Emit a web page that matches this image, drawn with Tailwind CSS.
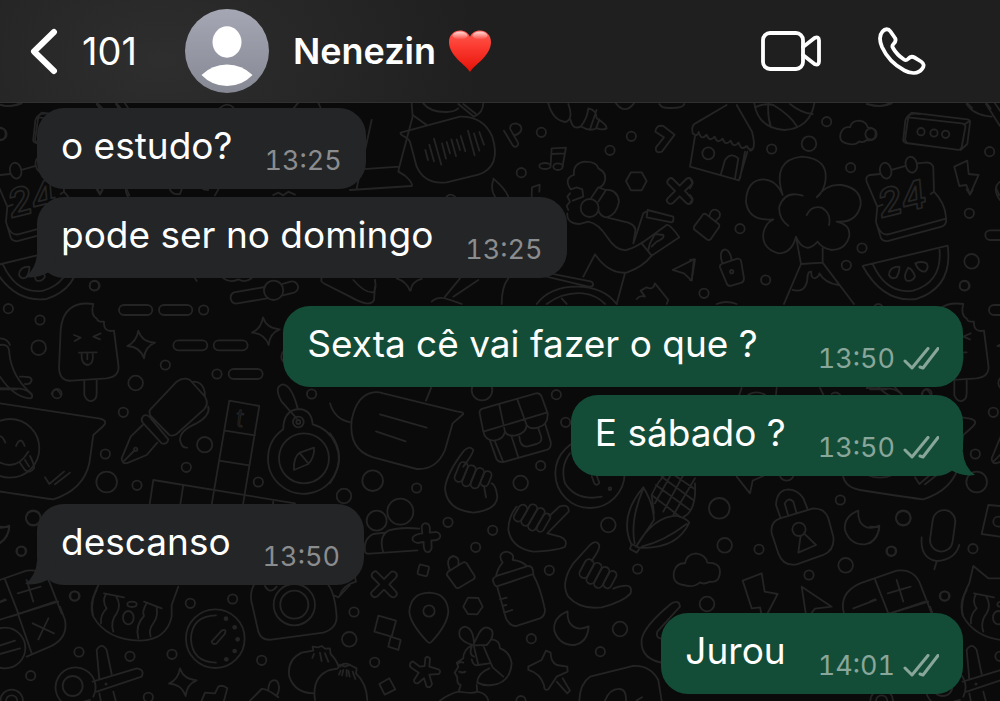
<!DOCTYPE html>
<html lang="pt-BR">
<head>
    <meta charset="UTF-8">
    <meta name="viewport" content="width=device-width, initial-scale=1.0">
    <title>Nenezin ❤️</title>
    <script src="https://cdn.jsdelivr.net/npm/@tailwindcss/browser@4"></script>
</head>
<body class="bg-[#0a0a0a] text-white font-['Inter',sans-serif] min-h-screen flex flex-col relative overflow-x-hidden">

    <!-- Wallpaper: one tile of doodles, repeated to the left and right -->
    <svg class="absolute inset-0 w-full h-full" viewBox="0 0 1000 701" preserveAspectRatio="xMidYMid slice" fill="none" stroke="#242424" stroke-width="5.5" stroke-linecap="round" stroke-linejoin="round" aria-hidden="true">
        <defs>
            <path id="cross" d="M-14 0L-36 -22Q-40 -30 -32 -36Q-26 -42 -20 -36L0 -16L20 -36Q28 -42 35 -35Q42 -28 36 -20L16 0L36 22Q42 30 35 36Q28 42 20 36L0 16L-20 36Q-28 42 -35 35Q-42 28 -36 22Z"/>
            <path id="moon" d="M595 422Q550 440 555 480Q570 525 615 523Q655 515 658 467Q620 485 600 455Q593 440 595 422Z"/>
            <path id="star" d="M415 122Q425 155 465 158Q435 170 432 205Q420 170 382 168Q410 155 415 122Z"/>
            <g id="doodles">
                <!-- top left -->
                <g transform="translate(0 100) scale(.3333)">
                    <circle cx="3" cy="102" r="17"/><circle cx="284" cy="557" r="15"/>
                    <path d="M112 130L105 120L115 50Q120 38 150 42M0 14Q30 24 60 10M290 8L306 24M350 10L362 26M660 24Q680 5 700 22M880 26L895 8M955 8L962 24"/>
                    <path d="M290 268L300 284L308 270M380 268L388 286M510 268Q515 285 540 282L545 268M610 268L625 270M655 268L645 286M820 285L835 278L850 286L865 275L885 284"/>
                    <path d="M795 561L702 577A18 18 0 0 0 708 611L802 595M848 552L872 545A17 17 0 0 1 882 578L846 587"/>
                    <circle cx="821" cy="571" r="29"/>
                    <path d="M585 535L590 543M670 535Q690 550 715 538Q735 550 755 535M965 535Q960 545 975 552L1050 590"/>
                </g>
                <!-- top middle -->
                <g transform="translate(350 100) scale(.3333)">
                    <path d="M20 265L65 60M0 270L185 258Q190 250 165 227L145 215L148 200L30 208M148 200L188 50L185 10"/>
                    <path d="M152 98L330 50Q400 48 427 110Q455 200 385 224L290 247Q225 255 200 200L180 125Q175 115 160 108Q150 103 152 98Z"/>
                    <path d="M226 150l8 30M238 134l14 50M252 116l22 78M276 130l12 46M290 126l10 34M304 118l14 50M320 118l10 32M332 108l14 46M354 92l20 74M372 100l16 52M388 96l14 38"/>
                    <path d="M188 45L230 75M220 10Q240 37 290 36Q315 35 325 25M325 12L372 50Q398 40 400 10M340 12L378 42"/>
                    <path d="M462 92L488 136A9 9 0 0 0 504 128L480 86Q480 70 498 70Q516 74 514 90Q508 103 495 105"/>
                    <circle cx="574" cy="97" r="14"/><circle cx="514" cy="218" r="14"/><circle cx="780" cy="151" r="14"/><circle cx="844" cy="109" r="14"/>
                    <path d="M602 195L605 145L648 143L638 198M604 162L645 160"/>
                    <ellipse cx="585" cy="198" rx="17" ry="9"/><ellipse cx="624" cy="200" rx="14" ry="10"/>
                    <path d="M595 10Q608 60 645 66Q672 60 655 12M662 60Q668 90 692 80Q712 55 715 25Q740 30 740 55Q772 75 770 85Q755 92 740 84Q720 96 695 80M740 30L720 88M748 58L738 86"/>
                    <path d="M798 10Q825 45 852 10M928 12Q935 25 960 24Q1000 25 1003 12"/>
                    <path d="M918 142L942 112L916 95Q918 74 940 78L974 104L936 155Q915 162 918 142Z"/>
                    <path d="M828 243L843 217H875L890 243L875 271H843Z"/>
                    <use href="#cross" x="989" y="273"/>
                    <path d="M662 268Q640 235 672 225Q668 190 705 185Q740 185 745 205Q775 220 762 250Q755 262 748 262M662 268L680 262L697 268L700 290L668 302M660 280L652 290L660 305L650 318L655 330M652 340Q650 372 690 372L715 365"/>
                    <circle cx="719" cy="324" r="27"/>
                    <path d="M723 295L745 262L768 270L745 305M768 270Q803 268 807 305Q800 345 770 352M745 330Q750 350 770 352L835 368Q862 378 855 400L850 430M715 365Q745 370 772 412Q800 455 830 450Q860 440 880 425"/>
                    <path d="M852 425L880 340L888 335M893 330L970 350Q972 365 965 367L890 352ZM875 430L950 375Q960 372 988 412L905 467ZM895 450L900 430L915 402L940 405Q945 415 920 425L905 440"/>
                    <path d="M700 530L735 463Q775 522 830 518Q880 500 905 467M825 520L800 612"/>
                    <path d="M545 290L546 262L569 254L568 275M430 240Q420 265 435 290M430 236Q465 265 475 290M290 290Q300 278 315 290"/>
                    <path d="M968 510L1032 478L1025 542L1002 520Z"/>
                    <path d="M600 520L725 545Q738 560 715 560L590 530M560 612Q600 560 680 560Q760 560 800 612M590 612Q640 575 700 580Q740 585 765 612M635 595L650 612M860 597Q870 585 885 590L872 572L890 562Q910 572 915 550L955 600L950 612"/>
                    <path d="M455 612Q455 560 475 535M285 590L330 535M310 590L385 540M245 605Q265 585 300 600L335 612M180 572Q170 545 140 535M182 572Q185 545 215 537M10 540Q45 580 70 577Q80 570 75 540M0 590Q60 625 72 600L75 560"/>
                </g>
                <!-- top right -->
                <g transform="translate(690 100) scale(.3333)">
                    <path d="M8 100Q2 75 20 68L110 15M140 15L186 95Q200 150 180 152M8 100Q22 112 26 96Q34 124 50 104Q58 128 74 110Q82 134 98 116Q106 140 122 122Q130 146 146 128Q154 154 170 138Q176 150 186 148M15 108L0 200L147 241L172 155M150 235L165 155M92 225L105 180Q122 155 145 175L135 235"/>
                    <circle cx="55" cy="160" r="18"/>
                    <path d="M193 10Q205 85 283 90Q360 85 373 10M235 10Q232 50 243 82M250 15Q300 45 320 78M300 12Q335 40 368 42M195 22Q225 8 250 15"/>
                    <circle cx="410" cy="65" r="14"/><circle cx="245" cy="147" r="14"/><circle cx="357" cy="131" r="22"/><circle cx="482" cy="203" r="14"/><circle cx="150" cy="386" r="14"/><circle cx="516" cy="444" r="14"/><circle cx="469" cy="496" r="14"/><circle cx="227" cy="540" r="14"/><circle cx="42" cy="580" r="14"/><circle cx="838" cy="340" r="14"/><circle cx="899" cy="155" r="14"/><circle cx="845" cy="484" r="22"/><circle cx="823" cy="557" r="14"/>
                    <path d="M470 130Q445 125 452 100Q460 78 480 82Q485 62 508 62Q530 65 533 82Q558 82 557 103Q555 125 530 120Q520 130 508 124Q495 138 470 130Z"/>
                    <path d="M655 52L815 70Q828 72 826 82L815 142Q812 152 800 149L648 129Q638 126 640 118L646 62Q648 52 655 52ZM650 52L665 38L832 58Q842 60 840 68L832 132L812 150M822 74L840 62"/>
                    <circle cx="693" cy="95" r="11"/><circle cx="732" cy="99" r="11"/><circle cx="767" cy="103" r="11"/>
                    <path d="M793 200L832 182L836 222L866 225L840 283L829 255L808 258Z"/>
                    <path d="M570 222L540 225Q525 230 530 245L562 320M605 210L647 198M682 190L712 187Q730 190 730 205L732 275M562 320L558 365L572 412Q578 425 595 423L755 380Q772 375 768 350Q765 310 732 275M562 378Q575 410 600 402L768 356M562 320L578 314M722 282L732 275"/>
                    <ellipse cx="587" cy="212" rx="17" ry="24" transform="rotate(-12 587 212)"/><ellipse cx="664" cy="194" rx="17" ry="24" transform="rotate(-12 664 194)"/>
                    <text x="574" y="354" transform="rotate(-14 574 354)" font-family="Inter" font-size="116" font-weight="600" font-style="italic" stroke-width="5">24</text>
                    <path d="M278 285Q245 180 335 170Q420 175 405 250Q398 280 380 292Q410 250 455 255Q515 265 512 315Q500 370 440 365Q485 375 477 412Q465 450 425 450Q395 445 383 425Q365 445 350 443Q330 440 318 410Q305 460 265 460Q215 445 220 400Q225 370 250 358Q175 365 168 305Q170 240 220 238Q260 240 278 285M338 287Q285 270 268 320Q265 355 295 377M350 345Q365 315 395 323Q425 340 417 375M318 410L333 492L398 488V445M333 492L282 612M398 488L492 612M308 570Q345 580 352 540Q352 512 364 515Q362 535 375 535Q388 530 388 520Q405 550 445 555"/>
                    <path d="M12 380L40 342Q45 340 50 344L86 372Q90 376 87 382L62 418Q56 423 50 418L12 388ZM58 348Q62 325 80 330Q95 338 88 352L76 364"/>
                    <path d="M95 492L142 476Q150 475 153 482L162 535Q162 545 155 548L122 558Q113 558 110 550L90 502Q88 495 95 492ZM97 490Q85 452 105 448Q120 450 125 480"/>
                    <circle cx="125" cy="515" r="5"/>
                    <path d="M518 498L773 437Q790 560 680 597Q580 610 518 498ZM548 492Q590 585 670 572Q760 545 748 443M628 500Q598 500 597 525Q605 540 620 532Q630 515 628 500ZM655 503Q638 530 650 542Q668 545 675 530Q670 510 655 503ZM676 490Q685 515 705 515Q718 505 710 490Q695 482 676 490Z"/>
                    <rect x="886" y="391" width="100" height="29" rx="14"/>
                    <path d="M530 12Q575 25 605 10M830 12Q850 45 905 50M888 12L930 78M915 10L930 32M930 245Q905 265 930 300M0 235L8 250L0 265M0 285L8 297L0 310M0 480L15 478L5 540L0 540M80 612Q110 600 140 612"/>
                </g>
                <!-- middle left -->
                <g transform="translate(0 290) scale(.3333)">
                    <circle cx="25" cy="56" r="14"/><circle cx="120" cy="90" r="14"/><circle cx="116" cy="173" r="22"/><circle cx="171" cy="311" r="14"/><circle cx="496" cy="225" r="14"/><circle cx="407" cy="279" r="22"/><circle cx="370" cy="367" r="14"/><circle cx="316" cy="492" r="14"/><circle cx="320" cy="576" r="31"/><circle cx="411" cy="586" r="14"/><circle cx="559" cy="532" r="14"/><circle cx="614" cy="464" r="23"/><circle cx="651" cy="252" r="14"/><circle cx="775" cy="576" r="14"/><circle cx="935" cy="312" r="14"/><circle cx="1032" cy="618" r="22"/><circle cx="611" cy="60" r="14"/><circle cx="866" cy="200" r="22"/>
                    <rect x="357" y="45" width="100" height="30" rx="15"/><rect x="477" y="45" width="100" height="30" rx="15"/><rect x="520" y="151" width="102" height="30" rx="15"/><rect x="641" y="151" width="102" height="30" rx="15"/><rect x="686" y="237" width="102" height="30" rx="15"/>
                    <use href="#star"/><use href="#star" x="374" y="-40"/>
                    <path d="M280 42Q190 30 182 120L177 235Q180 275 215 272L320 265Q360 260 355 225L342 122Q310 128 312 95Q290 95 292 88Q270 75 280 42ZM253 272V315Q260 335 275 333Q290 330 290 310V270M222 135l20 8-18 10M302 130l-22 10 20 8M237 188L290 187M245 190Q243 225 265 225Q282 220 278 190M262 190v18"/>
                    <path d="M0 145Q22 145 30 165M0 165Q28 160 28 190Q35 260 95 312Q100 325 88 325Q40 320 0 260M60 260Q95 258 95 270Q92 285 75 282M0 298H50"/>
                    <path d="M0 340L300 386Q325 392 310 408L280 435L268 520Q250 600 160 628Q130 625 -30 600Q-85 590 -82 540L-70 420Q-60 330 0 340Z"/>
                    <circle cx="30" cy="475" r="88"/>
                    <path d="M-12 450Q2 425 16 458M48 468Q62 435 74 468M-5 515Q50 545 85 485M58 516L75 540Q90 552 102 535Q104 525 90 498M75 510l12 20M135 562L148 582L192 545M165 583L210 548"/>
                    <path d="M450 360L530 275Q550 260 570 270L615 320Q628 342 612 358L530 432Q518 440 508 435L452 378Q446 368 450 360ZM430 378Q420 390 430 400L485 460Q502 465 505 448L448 380Q438 372 430 378ZM428 405L392 440L365 505Q365 525 385 518L440 495L472 458M370 515L402 483M580 275Q612 275 615 315M625 350Q632 375 590 400Q540 420 540 450Q545 475 562 473"/>
                    <circle cx="407" cy="478" r="5"/>
                    <path d="M688 332L778 348L728 650M688 332L634 650M675 422L765 436M657 512L748 526M448 650L460 570L885 640M550 585L540 650M820 635L818 650"/>
                    <text x="706" y="408" transform="rotate(8 706 408)" font-family="Inter" font-size="74" font-weight="300" stroke-width="3">t</text>
                    <path d="M850 418A106 106 0 1 0 938 403Q935 358 895 357Q850 362 850 418M890 385L845 335Q820 290 848 283Q875 285 893 355M882 540Q880 500 900 488L942 473Q945 500 925 522ZM900 490L925 520"/>
                    <circle cx="912" cy="505" r="75"/><circle cx="895" cy="396" r="16"/><circle cx="895" cy="396" r="6"/>
                </g>
                <!-- centre -->
                <g transform="translate(330 370) scale(.3333)">
                    <path d="M130 67Q80 75 65 150Q55 240 130 262L260 297Q320 300 345 240L368 160L400 132Q402 126 380 124L160 70Q145 65 130 67ZM150 133L290 173M138 184L227 214M304 52L288 92M0 100Q15 150 62 157M0 190Q55 260 0 340"/>
                    <circle cx="456" cy="60" r="31"/><circle cx="679" cy="74" r="14"/><circle cx="707" cy="157" r="14"/><circle cx="632" cy="287" r="14"/><circle cx="572" cy="339" r="22"/><circle cx="128" cy="332" r="31"/><circle cx="260" cy="354" r="14"/><circle cx="354" cy="457" r="14"/><circle cx="488" cy="481" r="14"/><circle cx="437" cy="532" r="14"/><circle cx="835" cy="465" r="22"/><circle cx="923" cy="597" r="14"/><circle cx="658" cy="601" r="14"/><circle cx="211" cy="425" r="39"/><circle cx="140" cy="452" r="30"/>
                    <path d="M450 135Q445 120 458 116L618 70Q630 68 635 80L653 130Q655 165 625 172Q600 180 590 165Q590 190 555 197Q530 198 525 185Q520 210 490 212Q465 210 460 185ZM460 185L652 127M508 105L525 185M562 88L590 165M480 212L500 268Q508 280 525 275L650 240Q665 235 662 215L645 160M495 215L518 272M545 200L565 262M568 200Q570 230 590 230L620 222Q640 215 632 195L625 175"/>
                    <path d="M400 290Q430 250 430 240Q420 225 402 242Q350 310 345 355Q350 420 430 428Q500 420 502 380Q498 345 485 340M462 348L468 382"/>
                    <g transform="rotate(22 430 325)"><rect x="376" y="290" width="26" height="62" rx="13"/><rect x="402" y="290" width="26" height="66" rx="13"/><rect x="428" y="288" width="26" height="64" rx="13"/><rect x="454" y="288" width="24" height="48" rx="12"/></g>
                    <circle cx="780" cy="310" r="104"/>
                    <path d="M815 380Q740 395 705 340Q690 290 720 250M785 318L793 340Q800 350 808 338L798 312"/>
                    <circle cx="840" cy="356" r="4"/>
                    <path d="M905 525Q865 440 940 352Q970 400 972 450L918 530M940 355Q900 450 914 520M918 530Q970 440 1040 437Q1070 445 1078 458Q1040 540 925 533M935 530Q1000 515 1070 462M905 522L930 534L920 548L900 537ZM972 430L965 375Q985 330 1015 305M1095 340Q1100 420 1062 440"/>
                    <path d="M965 375L1050 440M978 345L1080 420M995 320L1090 390M1025 310L1095 358M1095 325L1030 435M1060 315L1000 425M1025 310L975 400"/>
                    <path d="M658 438L688 410Q718 400 716 425L652 490L690 500Q715 510 705 530Q690 540 610 545Q545 535 535 480Q535 440 560 410"/>
                    <g transform="rotate(30 600 440)"><rect x="557" y="418" width="26" height="54" rx="13"/><rect x="583" y="402" width="25" height="70" rx="12"/><rect x="608" y="400" width="25" height="74" rx="12"/><rect x="633" y="405" width="22" height="60" rx="11"/></g>
                    <path d="M130 492Q100 505 105 545Q108 553 120 551L262 541M160 547Q145 500 175 482Q210 470 268 476M130 492L165 488"/>
                    <path d="M277 490L275 470Q280 455 294 462Q302 468 299 488L318 486Q334 490 330 502Q326 512 304 511L305 535Q300 550 288 545Q280 540 281 516L262 519Q245 515 248 503Q252 493 277 490Z"/>
                </g>
                <!-- right -->
                <g transform="translate(660 370) scale(.3333)">
                    <circle cx="178" cy="415" r="31"/><circle cx="194" cy="526" r="22"/><circle cx="297" cy="538" r="14"/><circle cx="541" cy="390" r="14"/><circle cx="730" cy="445" r="22"/><circle cx="693" cy="544" r="14"/><circle cx="447" cy="615" r="14"/><circle cx="557" cy="586" r="22"/><circle cx="141" cy="702" r="22"/><circle cx="853" cy="678" r="14"/><circle cx="939" cy="536" r="14"/><circle cx="380" cy="310" r="22"/>
                    <path d="M238 74L245 54M265 74Q290 60 315 74M350 54L348 74M480 54L490 74M515 72Q527 62 540 74M620 54L690 56Q715 60 725 74M785 72Q798 45 812 74"/>
                    <path d="M335 490Q330 455 360 445L460 415Q495 415 505 445L520 500Q525 540 490 555L410 583Q370 590 355 550ZM362 445L348 405Q350 360 385 358Q415 360 430 385L442 415M385 438L374 400Q385 380 400 395L410 430M422 497L415 548L468 525L432 490"/>
                    <circle cx="417" cy="478" r="20"/>
                    <use href="#moon"/>
                    <rect x="814" y="420" width="68" height="125" rx="34" transform="rotate(8 848 483)"/>
                    <path d="M785 502Q780 565 830 573Q885 570 898 525M830 575L823 598"/>
                    <path d="M70 645Q35 640 42 605Q50 578 75 580Q80 552 108 550Q138 555 142 578Q180 578 180 605Q178 640 150 635Q130 645 120 637Q100 655 70 645Z"/>
                    <path d="M248 632L305 610L314 665L353 672L320 735M248 632L275 715L300 712L305 735M438 735L425 650L515 710L465 716L450 735M230 320L270 370L278 332L310 318"/>
                    <path d="M552 730Q535 670 600 640L710 602Q760 595 780 640L815 730M645 628L685 730M580 715L648 690M662 740L795 695M683 670L752 650M710 630L730 695"/>
                    <path d="M1020 408L985 405L965 492L1020 500"/><circle cx="1015" cy="455" r="15"/>
                    <path d="M1040 625L985 625L940 588L928 640Q900 690 908 735"/>
                </g>
                <!-- bottom left -->
                <g transform="translate(0 490) scale(.3333)">
                    <circle cx="100" cy="83" r="22"/><circle cx="65" cy="183" r="14"/><circle cx="225" cy="318" r="14"/><circle cx="571" cy="340" r="14"/><circle cx="698" cy="327" r="14"/><circle cx="516" cy="493" r="14"/><circle cx="237" cy="486" r="14"/><circle cx="390" cy="499" r="14"/><circle cx="92" cy="557" r="14"/><circle cx="785" cy="511" r="14"/><circle cx="445" cy="622" r="14"/><circle cx="1048" cy="448" r="22"/>
                    <path d="M0 110L28 112Q25 140 0 160"/>
                    <path d="M180 350L195 390Q205 445 150 470L80 500M55 375L95 490M-20 395L175 335M98 400L162 430M145 385L115 448M0 335L15 328M-10 470L45 452M-10 495L60 475"/>
                    <circle cx="15" cy="474" r="61"/>
                    <path d="M290 300Q265 340 280 380Q320 450 420 452Q500 450 515 380L515 345L535 290M312 310L372 322M318 312Q305 335 320 355Q300 375 303 400M348 318Q365 345 350 370Q330 395 340 425M432 335L485 355M440 340Q425 365 432 378Q405 405 415 445M470 352Q475 380 460 400Q445 420 452 440"/>
                    <ellipse cx="396" cy="343" rx="14" ry="8"/><ellipse cx="385" cy="383" rx="16" ry="20"/>
                    <circle cx="646" cy="446" r="88"/>
                    <path d="M648 376Q575 378 573 446Q575 515 648 518M635 455L665 422Q682 415 674 432L650 460Q638 466 635 455Z"/>
                    <g fill="#242424" stroke="none"><circle cx="678" cy="386" r="7"/><circle cx="704" cy="412" r="7"/><circle cx="713" cy="448" r="7"/><circle cx="704" cy="483" r="7"/><circle cx="679" cy="508" r="7"/></g>
                    <path d="M765 280Q745 310 758 350L775 425Q785 455 820 448L970 428Q1010 415 1010 380Q1005 310 985 285M795 288Q810 315 830 290M1000 315L1015 322L1050 285"/>
                    <circle cx="883" cy="344" r="62"/><circle cx="883" cy="344" r="42"/>
                    <path d="M942 610Q885 610 868 560Q860 510 905 488L940 482L938 470L955 472L965 468L975 476L990 475L992 492Q1010 510 1015 528M945 630Q935 560 990 540L1012 536L1020 524L1035 530L1050 524M942 492l-5 12M960 488l5 25M975 490l10 25M1022 542l-5 12M1040 540v18"/>
                    <path d="M270 630L240 638M280 620A60 60 0 1 0 190 640M278 575L410 535Q435 538 425 560L290 605M298 568L290 480Q305 455 320 480L335 552M340 605l8 30M298 610l5 25"/>
                    <circle cx="218" cy="588" r="30"/><circle cx="318" cy="582" r="2"/><circle cx="35" cy="633" r="34"/><circle cx="35" cy="633" r="17"/>
                    <use href="#star" x="125" y="413"/>
                    <path d="M605 632L615 608L645 610L655 590Q668 583 682 595L672 632M750 632L785 597Q800 595 835 622M805 597Q808 565 830 572Q845 590 830 618"/>
                </g>
                <!-- bottom middle -->
                <g transform="translate(340 500) scale(.3333)">
                    <use href="#cross" x="132" y="253"/>
                    <rect x="235" y="196" width="30" height="30" rx="4" transform="rotate(14 250 211)"/>
                    <path d="M324 215L370 187Q376 185 380 190L404 228Q406 234 400 238L356 264Q350 266 346 260L320 224ZM330 211Q315 175 340 168Q360 172 355 194"/>
                    <path d="M370 320L384 293L415 294L428 320L412 343L384 342Z"/>
                    <path d="M262 425Q210 370 208 335Q212 280 267 278Q322 280 325 335Q322 375 275 425Q268 432 262 425Z"/><circle cx="267" cy="333" r="17"/>
                    <circle cx="42" cy="336" r="14"/><circle cx="104" cy="487" r="14"/><circle cx="574" cy="416" r="14"/><circle cx="840" cy="387" r="22"/><circle cx="781" cy="455" r="14"/><circle cx="543" cy="602" r="14"/>
                    <path d="M115 347L168 362L155 410L103 395ZM152 410L182 420L175 450L145 440ZM118 552L148 535L166 568L134 584ZM0 285Q10 255 48 245L45 232L35 236M0 500Q10 485 30 495L50 505L48 520Q80 550 82 600M10 510l-4 16M25 512l4 18M38 515l8 22"/>
                    <path d="M254 498L256 475Q262 465 270 476L268 500L296 508Q305 516 296 522L268 524L276 552Q272 565 260 560L252 535L234 550Q222 552 222 540L236 518L212 502Q205 490 218 484L240 500Z"/>
                    <path d="M402 430Q400 385 375 380Q352 385 360 412Q375 432 405 436L440 435Q465 410 455 390Q435 372 418 398L402 430M395 436Q370 450 370 475L350 488L355 500L344 518L352 532Q350 552 362 555L356 575Q330 580 300 602M356 575Q400 582 412 575L410 555M412 575Q440 580 445 602M455 418Q480 420 480 445Q510 455 515 490Q510 550 455 555Q430 558 412 548M402 440L415 495L448 490M430 438L458 502L490 530M355 490Q362 484 370 488M358 515Q368 520 376 515M395 440Q386 465 402 470M395 478Q400 500 415 495M448 505Q412 520 412 548"/>
                    <path d="M472 262L498 355Q510 380 530 378L600 355Q620 345 613 320Q600 260 580 225M460 245Q455 235 470 228L565 198Q580 198 580 222L475 258Q465 262 460 245ZM468 228Q475 200 488 188Q470 160 500 155Q525 160 518 180Q545 182 560 198M480 298l20-5M487 318l12-3M492 338l25-8"/>
                    <path d="M755 182Q780 150 778 135Q768 118 750 135L700 190Q660 250 685 290Q720 330 785 322Q850 305 872 280Q878 255 855 257Q835 258 820 266"/>
                    <g transform="rotate(28 775 228)"><rect x="720" y="195" width="27" height="60" rx="13"/><rect x="747" y="193" width="26" height="68" rx="13"/><rect x="773" y="193" width="26" height="68" rx="13"/><rect x="799" y="193" width="24" height="56" rx="12"/></g>
                    <use href="#moon" x="88" y="-88"/>
                    <path d="M978 490Q900 480 905 420Q910 380 995 310Q1018 298 1020 320L952 395Q945 420 978 415"/>
                    <path d="M565 500L605 480L618 452L632 458Q632 485 650 495L682 500L683 515L650 530L625 568Q612 575 612 555Q600 520 565 510ZM650 545L682 580L690 572L668 535"/>
                    <path d="M718 602Q720 550 750 530L880 498Q930 495 955 540L965 602M795 602Q810 565 840 567Q860 570 858 602M890 602l16-10"/>
                </g>
            </g>
        </defs>
        <use href="#doodles"/>
        <use href="#doodles" x="-870"/>
        <use href="#doodles" x="870"/>
    </svg>

    <header class="relative flex items-center h-[103px] pl-[30px] pr-[74px] border-b border-[#303030] bg-[#1f1f1f] bg-[radial-gradient(320px_220px_at_160px_60px,#2e2e2e,#1f1f1f)]">
        <button class="flex items-center gap-6" aria-label="Voltar, 101 conversas">
            <svg class="w-7 h-12" viewBox="0 0 28 48" fill="none" stroke="#fff" stroke-width="6" stroke-linecap="round" stroke-linejoin="round"><path d="M24 5L4 24.500L24 44"/></svg>
            <span class="text-[38px] leading-10">101</span>
        </button>
        <a href="#" class="flex items-center ml-12 gap-6">
            <svg class="w-[84px] h-[84px]" viewBox="0 0 84 84" aria-hidden="true">
                <defs>
                    <linearGradient id="avatar" x1="0" y1="0" x2="0" y2="1"><stop offset="0" stop-color="#a5a8b4"/><stop offset="1" stop-color="#868994"/></linearGradient>
                </defs>
                <circle cx="42" cy="42" r="42" fill="url(#avatar)"/>
                <ellipse cx="42" cy="33" rx="14.500" ry="15.700" fill="#fff"/>
                <path d="M16.500 66Q27 55.500 42 55.500T67.500 66Q57 77 42 77T16.500 66Z" fill="#fff"/>
            </svg>
            <span class="flex items-center gap-3">
                <span class="text-[36px] leading-10 font-semibold">Nenezin</span>
                <svg class="w-11 h-11" viewBox="0 0 44 44" role="img" aria-label="coração">
                    <defs>
                        <linearGradient id="heart" x1="0" y1="0" x2="0" y2="1"><stop offset="0" stop-color="#ff5b50"/><stop offset=".4" stop-color="#fb3a30"/><stop offset="1" stop-color="#e51208"/></linearGradient>
                        <linearGradient id="shine" x1="0" y1="0" x2="0" y2="1"><stop offset="0" stop-color="#fff" stop-opacity=".75"/><stop offset="1" stop-color="#fff" stop-opacity="0"/></linearGradient>
                    </defs>
                    <path d="M22 43C18 36 1 27 1 13C1 6 6 1.500 12 1.500C17 1.500 20.500 4 22 8C23.500 4 27 1.500 32 1.500C38 1.500 43 6 43 13C43 27 26 36 22 43Z" fill="url(#heart)"/>
                    <ellipse cx="12" cy="6.500" rx="7.500" ry="4" fill="url(#shine)"/>
                    <ellipse cx="32" cy="6.500" rx="7.500" ry="4" fill="url(#shine)"/>
                </svg>
            </span>
        </a>
        <div class="ml-auto flex items-center gap-14">
            <button aria-label="Chamada de vídeo">
                <svg class="w-[62px] h-[42px]" viewBox="0 0 62 42" fill="none" stroke="#fff" stroke-width="3.800" stroke-linecap="round" stroke-linejoin="round">
                    <rect x="3" y="3" width="40" height="36" rx="7"/>
                    <path d="M43 17L54.500 8Q59 6 59 10.500V31.500Q59 36 54.500 34L43 25"/>
                </svg>
            </button>
            <button aria-label="Chamada de voz">
                <svg class="w-12 h-12" viewBox="0 0 48 48" fill="none" stroke="#fff" stroke-width="3.800" stroke-linecap="round" stroke-linejoin="round">
                    <path d="M4.500 4.500C7 1.500 10.500 1.500 12.500 4.500L17 11C18.500 13.500 17.500 15 15.500 17C14 18.500 14 19.500 15 21C17.500 25.500 21.500 29.500 26 32.500C27.500 33.500 28.500 33.500 30 32C32 29.500 34 29 36.500 30.500L43 34.500C46 36.500 46.500 39 44 42C40 47 33 47 26.500 43.500C17 38.500 8.500 30 4 20C1.500 14 1 8.500 4.500 4.500Z"/>
                </svg>
            </button>
        </div>
    </header>

    <main class="relative flex-1 flex flex-col gap-2 px-[37px] pt-[5px] pb-[6px]">
        <div class="self-start flex items-end gap-8 px-6 pt-[9px] pb-[14px] rounded-[27px] bg-[#232527]">
            <p class="text-[37px] leading-[58px]">o estudo?</p>
            <time class="text-[27px] leading-7 tabular-nums text-[#8b8c8e]">13:25</time>
        </div>
        <div class="relative self-start flex items-end gap-8 px-6 pt-[9px] pb-[14px] rounded-[27px] bg-[#232527]">
            <svg class="absolute -left-3 bottom-0 w-8 h-6" viewBox="0 0 32 24" fill="#232527" aria-hidden="true"><path d="M12 0Q11 15 0 23Q13 25 24 18L32 0Z"/></svg>
            <p class="relative text-[37px] leading-[58px]">pode ser no domingo</p>
            <time class="text-[27px] leading-7 tabular-nums text-[#8b8c8e]">13:25</time>
        </div>

        <div class="self-end mt-5 flex items-end gap-[60px] px-6 pt-[9px] pb-[14px] rounded-[27px] bg-[#144d37]">
            <p class="text-[37px] leading-[58px]">Sexta cê vai fazer o que ?</p>
            <div class="flex items-center gap-2 text-[#89a69b]">
                <time class="text-[27px] leading-7 tabular-nums">13:50</time>
                <svg class="w-9 h-6" viewBox="0 0 36 24" fill="none" stroke="currentColor" stroke-width="3" stroke-linecap="round" stroke-linejoin="round" role="img" aria-label="entregue"><path d="M2 14L9 21L25 1.500M17 20L20 21L35 1.500"/></svg>
            </div>
        </div>
        <div class="relative self-end flex items-end gap-8 px-6 pt-[9px] pb-[14px] rounded-[27px] bg-[#144d37]">
            <svg class="absolute -right-3 bottom-0 w-8 h-6" viewBox="0 0 32 24" fill="#144d37" aria-hidden="true"><path d="M20 0Q21 15 32 23Q19 25 8 18L0 0Z"/></svg>
            <p class="text-[37px] leading-[58px]">E sábado ?</p>
            <div class="relative flex items-center gap-2 text-[#89a69b]">
                <time class="text-[27px] leading-7 tabular-nums">13:50</time>
                <svg class="w-9 h-6" viewBox="0 0 36 24" fill="none" stroke="currentColor" stroke-width="3" stroke-linecap="round" stroke-linejoin="round" role="img" aria-label="entregue"><path d="M2 14L9 21L25 1.500M17 20L20 21L35 1.500"/></svg>
            </div>
        </div>

        <div class="relative self-start mt-5 flex items-end gap-8 px-6 pt-[9px] pb-[14px] rounded-[27px] bg-[#232527]">
            <svg class="absolute -left-3 bottom-0 w-8 h-6" viewBox="0 0 32 24" fill="#232527" aria-hidden="true"><path d="M12 0Q11 15 0 23Q13 25 24 18L32 0Z"/></svg>
            <p class="relative text-[37px] leading-[58px]">descanso</p>
            <time class="text-[27px] leading-7 tabular-nums text-[#8b8c8e]">13:50</time>
        </div>

        <div class="self-end mt-5 flex items-end gap-8 px-6 pt-[9px] pb-[14px] rounded-[27px] bg-[#144d37]">
            <p class="text-[37px] leading-[58px]">Jurou</p>
            <div class="flex items-center gap-2 text-[#89a69b]">
                <time class="text-[27px] leading-7 tabular-nums">14:01</time>
                <svg class="w-9 h-6" viewBox="0 0 36 24" fill="none" stroke="currentColor" stroke-width="3" stroke-linecap="round" stroke-linejoin="round" role="img" aria-label="entregue"><path d="M2 14L9 21L25 1.500M17 20L20 21L35 1.500"/></svg>
            </div>
        </div>
    </main>
</body>
</html>
